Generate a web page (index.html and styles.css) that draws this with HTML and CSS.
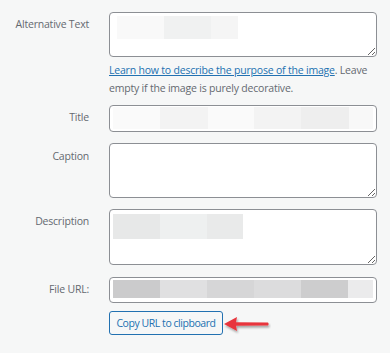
FILE: index.html
```html
<!DOCTYPE html>
<html lang="en">
<head>
    <meta charset="UTF-8">
    <meta name="viewport" content="width=device-width, initial-scale=1.0">
    <title>Attachment Details</title>
    <link rel="stylesheet" href="styles.css">
</head>
<body>
    <div class="settings">
        <div class="setting">
            <label for="altText">Alternative Text</label>
            <div class="field">
                <textarea id="altText" class="alt-text"></textarea>
                <p class="description"><a href="#">Learn how to describe the purpose of the image</a>. Leave empty if the image is purely decorative.</p>
            </div>
        </div>

        <div class="setting setting-title">
            <label for="title">Title</label>
            <div class="field">
                <input type="text" id="title" class="title-input">
            </div>
        </div>

        <div class="setting setting-caption">
            <label for="caption">Caption</label>
            <div class="field">
                <textarea id="caption" class="caption"></textarea>
            </div>
        </div>

        <div class="setting setting-description">
            <label for="description">Description</label>
            <div class="field">
                <textarea id="description" class="desc"></textarea>
            </div>
        </div>

        <div class="setting setting-url">
            <label for="fileUrl">File URL:</label>
            <div class="field">
                <input type="text" id="fileUrl" class="url-input" readonly>
                <div class="copy-row">
                    <button type="button" class="btn">Copy URL to clipboard</button>
                    <svg class="arrow" width="48" height="22" viewBox="0 0 48 22">
                        <defs>
                            <filter id="shadow" x="-20%" y="-40%" width="140%" height="200%">
                                <feDropShadow dx="1" dy="2" stdDeviation="1.2" flood-color="#000" flood-opacity="0.35"/>
                            </filter>
                        </defs>
                        <path d="M1 9 L14 2 L13 7.2 L45 7.6 Q46.5 9 45 10.4 L13 10.8 L14 16 Z" fill="#e8363d" filter="url(#shadow)"/>
                    </svg>
                </div>
            </div>
        </div>
    </div>
</body>
</html>
```

FILE: styles.css
```css
* {
    box-sizing: border-box;
    margin: 0;
    padding: 0;
}

body {
    background-color: #f6f7f7;
    font-family: 'Open Sans', 'Noto Sans', sans-serif;
    font-size: 10.5px;
    letter-spacing: -0.2px;
    color: #50575e;
    padding-top: 12px;
}

.setting {
    display: flex;
}

.setting label {
    width: 89px;
    margin-right: 20px;
    text-align: right;
    line-height: 18px;
    padding-top: 3px;
    color: #646970;
}

.field {
    width: 268px;
    display: flex;
    flex-direction: column;
}

textarea,
input[type="text"] {
    display: block;
    width: 100%;
    border: 1px solid #8c8f94;
    border-radius: 4px;
    background-color: #fff;
    background-repeat: no-repeat;
    font-family: inherit;
    font-size: 11px;
    outline: none;
}

.alt-text {
    height: 45px;
    background-image: linear-gradient(to right, #f9f9f9 0 47px, #f0f1f1 47px 94px, #f5f5f5 94px 121px);
    background-position: 7px 3px;
    background-size: 121px 23px;
}

.description {
    margin-top: 4px;
    line-height: 18px;
    color: #646970;
}

.description a {
    color: #2271b1;
}

.setting-title {
    margin-top: 8px;
}

.title-input {
    height: 27px;
    background-image: linear-gradient(to right, #fafafa 0 47px, #f3f3f3 47px 95px, #fafafa 95px 141px, #f3f3f3 141px 188px, #eeeeee 188px 236px, #f8f8f8 236px 260px);
    background-position: 3px 1px;
    background-size: 260px 22px;
}

.setting-caption {
    margin-top: 11px;
}

.setting-caption label {
    padding-top: 4px;
}

.caption {
    height: 55px;
}

.setting-description {
    margin-top: 11px;
}

.desc {
    height: 56px;
    background-image: linear-gradient(to right, #e7e8e8 0 47px, #eef0f0 47px 94px, #e9eaea 94px 130px);
    background-position: 3px 4px;
    background-size: 130px 25px;
}

.setting-url {
    margin-top: 12px;
}

.url-input {
    height: 26px;
    background-color: #f0f0f1;
    background-image: linear-gradient(to right, #cbcbcc 0 47px, #e0e0e1 47px 94px, #d6d6d7 94px 141px, #dcdcdd 141px 188px, #cdcdce 188px 235px, #ebebec 235px 260px);
    background-position: 3px 2px;
    background-size: 260px 18px;
}

.copy-row {
    display: flex;
    align-items: flex-start;
    margin-top: 8px;
}

.btn {
    width: 114px;
    height: 24px;
    padding: 0;
    border: 1px solid #2271b1;
    border-radius: 3px;
    background-color: #f6f7f7;
    color: #2271b1;
    font-family: inherit;
    font-size: 10.5px;
    letter-spacing: -0.45px;
    white-space: nowrap;
    cursor: pointer;
}

.arrow {
    display: block;
    margin-top: 4px;
}
```
